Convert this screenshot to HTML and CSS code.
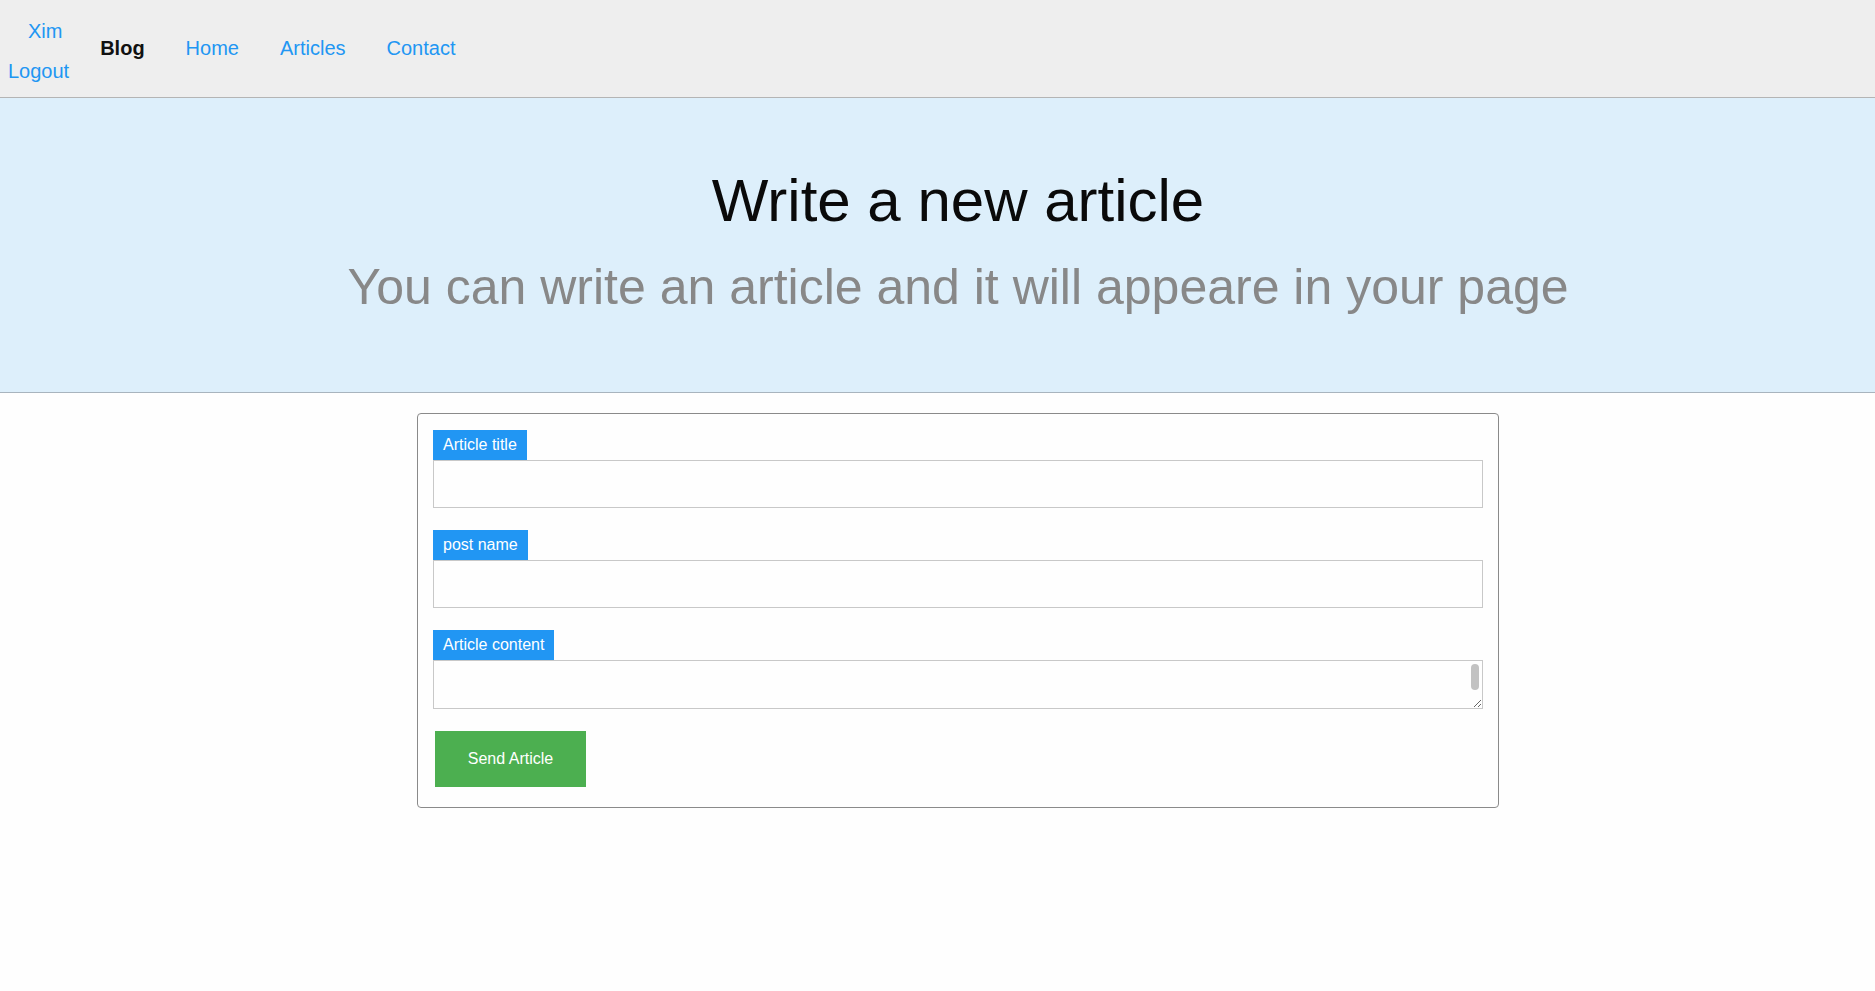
FILE: index.html
```html
<!DOCTYPE html>
<html lang="en">
<head>
<meta charset="utf-8">
<title>Write a new article</title>
<link rel="stylesheet" href="styles.css">
</head>
<body>
<nav class="topnav">
  <div class="user">
    <a class="user-name" href="#">Xim</a>
    <a class="user-logout" href="#">Logout</a>
  </div>
  <span class="brand">Blog</span>
  <a class="nav-link" href="#">Home</a>
  <a class="nav-link" href="#">Articles</a>
  <a class="nav-link" href="#">Contact</a>
</nav>
<header class="hero">
  <h1 class="hero-title">Write a new article</h1>
  <p class="hero-sub">You can write an article and it will appeare in your page</p>
</header>
<main class="main">
  <form class="card">
    <div class="field">
      <label class="tag" for="title">Article title</label>
      <input class="input" id="title" type="text">
    </div>
    <div class="field">
      <label class="tag" for="post">post name</label>
      <input class="input" id="post" type="text">
    </div>
    <div class="field">
      <label class="tag" for="content">Article content</label>
      <div class="area-wrap">
        <textarea class="area" id="content"></textarea>
        <span class="thumb"></span>
      </div>
    </div>
    <div class="actions">
      <button class="btn" type="button">Send Article</button>
    </div>
  </form>
</main>
</body>
</html>
```
FILE: styles.css
```css
html, body {
  margin: 0;
  padding: 0;
  background: #fefefe;
  font-family: "Liberation Sans", Arial, sans-serif;
}

a { text-decoration: none; }

.topnav {
  display: flex;
  align-items: center;
  height: 97px;
  background: #eeeeee;
  border-bottom: 1px solid #b4b4b4;
  font-size: 20px;
}

.user {
  display: flex;
  flex-direction: column;
  padding-left: 8px;
  margin-top: 4px;
  line-height: 40px;
}

.user a { color: #2196f3; }
.user-name { padding-left: 20px; }

.brand {
  font-weight: bold;
  color: #111;
  margin-left: 31px;
  margin-right: 41px;
}

.nav-link {
  color: #2196f3;
  margin-right: 41px;
}

.hero {
  background: #ddeffb;
  border-bottom: 1px solid #a8b4be;
  text-align: center;
  height: 295px;
  box-sizing: border-box;
  padding-top: 68px;
  padding-left: 41px;
}

.hero-title {
  margin: 0;
  font-size: 60px;
  font-weight: normal;
  color: #0a0a0a;
  line-height: 70px;
}

.hero-sub {
  margin: 21px 0 0;
  font-size: 50px;
  color: #888888;
  line-height: 60px;
}

.main {
  padding-top: 20px;
  padding-left: 417px;
}

.card {
  width: 1082px;
  box-sizing: border-box;
  border: 1px solid #8a8a8a;
  border-radius: 4px;
  padding: 16px 15px 20px;
}

.field {
  display: flex;
  flex-direction: column;
  align-items: flex-start;
  margin-bottom: 22px;
}

.tag {
  background: #2196f3;
  color: #fff;
  font-size: 16px;
  height: 30px;
  line-height: 30px;
  padding: 0 10px;
}

.input {
  width: 100%;
  height: 48px;
  box-sizing: border-box;
  border: 1px solid #c8c8c8;
  margin: 0;
  padding: 0 8px;
  font: inherit;
  background: #fefefe;
}

.area-wrap {
  position: relative;
  width: 100%;
  height: 49px;
}

.area {
  display: block;
  width: 100%;
  height: 49px;
  box-sizing: border-box;
  border: 1px solid #c8c8c8;
  margin: 0;
  padding: 4px 8px;
  font: inherit;
  background: #fefefe;
  overflow-y: scroll;
  resize: vertical;
}

.area::-webkit-scrollbar {
  width: 16px;
}

.area::-webkit-scrollbar-track {
  background: #fbfbfb;
  border-left: 1px solid #ececec;
}

.area::-webkit-scrollbar-corner {
  background: #fbfbfb;
}

.thumb {
  position: absolute;
  right: 4px;
  top: 4px;
  width: 8px;
  height: 26px;
  border-radius: 4px;
  background: #c2c2c2;
}

.actions {
  margin-top: 4px;
  padding-left: 2px;
}

.btn {
  background: #4caf50;
  color: #fff;
  border: none;
  font-family: inherit;
  font-size: 16px;
  width: 151px;
  height: 56px;
  padding: 0;
  display: block;
}
```
